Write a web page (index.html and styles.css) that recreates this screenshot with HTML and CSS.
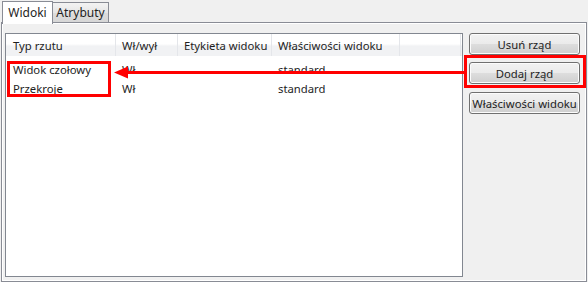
FILE: index.html
```html
<!DOCTYPE html>
<html lang="pl">
<head>
<meta charset="utf-8">
<link rel="stylesheet" href="styles.css">
</head>
<body>
<div class="window">
  <div class="tabs">
    <div class="tab active">Widoki</div>
    <div class="tab">Atrybuty</div>
  </div>
  <div class="panel">
    <div class="list">
      <div class="row header">
        <div class="cell c1">Typ rzutu</div>
        <div class="cell c2">Wł/wył</div>
        <div class="cell c3">Etykieta widoku</div>
        <div class="cell c4">Właściwości widoku</div>
        <div class="cell c5"></div>
      </div>
      <div class="row item">
        <div class="cell c1">Widok czołowy</div>
        <div class="cell c2">Wł</div>
        <div class="cell c3"></div>
        <div class="cell c4">standard</div>
      </div>
      <div class="row item">
        <div class="cell c1">Przekroje</div>
        <div class="cell c2">Wł</div>
        <div class="cell c3"></div>
        <div class="cell c4">standard</div>
      </div>
    </div>
    <div class="buttons">
      <button class="btn">Usuń rząd</button>
      <button class="btn second">Dodaj rząd</button>
      <button class="btn third">Właściwości widoku</button>
    </div>
  </div>
  <svg class="annot" width="588" height="282" viewBox="0 0 588 282">
    <rect x="8.5" y="62.5" width="101" height="33" fill="none" stroke="#ff0000" stroke-width="3"/>
    <rect x="465.5" y="56.5" width="119" height="30" fill="none" stroke="#ff0000" stroke-width="3"/>
    <rect x="125" y="71" width="340" height="3" fill="#ff0000"/>
    <polygon points="114,72.5 128,66.5 128,78.5" fill="#ff0000"/>
  </svg>
</div>
</body>
</html>
```
FILE: styles.css
```css
* { box-sizing: border-box; }
html, body {
  margin: 0;
  padding: 0;
  background: #f0f0f0;
  font-family: "Noto Sans", "Open Sans", sans-serif;
  font-size: 11.3px;
  color: #1e1e1e;
}
.window {
  position: relative;
  width: 588px;
  height: 282px;
}
.tabs {
  display: flex;
  align-items: flex-end;
  height: 23px;
  padding-left: 2px;
}
.tab {
  height: 20px;
  width: 57px;
  border: 1px solid #898c95;
  border-bottom: none;
  background: linear-gradient(#f3f3f3, #e6e6e6 50%, #dcdcdc 51%, #d7d7d7);
  display: flex;
  align-items: center;
  justify-content: center;
  margin-left: -1px;
  margin-bottom: 1px;
  font-size: 12px;
}
.tab.active {
  width: 51px;
  height: 23px;
  background: #ffffff;
  margin-left: 0;
  margin-bottom: -1px;
  position: relative;
  z-index: 1;
  padding-bottom: 2px;
}
.panel {
  display: flex;
  gap: 6px;
  margin: -1px 1px 1px 1px;
  height: 260px;
  border: 1px solid #898c95;
  box-shadow: inset 1px 1px 0 #ffffff, inset -1px -1px 0 #ffffff;
  padding: 10px 5px 4px 3px;
}
.list {
  width: 458px;
  height: 244px;
  background: #ffffff;
  border: 1px solid #828790;
}
.row {
  display: flex;
}
.header {
  height: 22px;
  background: linear-gradient(#ffffff, #ffffff 45%, #f1f2f4 55%, #f1f2f4);
  margin-bottom: 4px;
}
.cell {
  padding-left: 6px;
  white-space: nowrap;
  display: flex;
  align-items: center;
}
.header .cell {
  border-right: 1px solid #e4e6ea;
}
.c1 { width: 110px; padding-left: 7px; }
.c2 { width: 62px; }
.c3 { width: 94px; }
.c4 { width: 128px; }
.c5 { width: 61px; }
.item {
  height: 19px;
}
.buttons {
  display: flex;
  flex-direction: column;
  width: 112px;
}
.btn {
  font: inherit;
  color: #1e1e1e;
  height: 22px;
  width: 111px;
  border: 1px solid #707070;
  border-radius: 3px;
  background: linear-gradient(#f2f2f2, #ebebeb 48%, #dddddd 52%, #cfcfcf);
  box-shadow: inset 0 0 0 1px #fcfcfc;
  padding: 0;
  white-space: nowrap;
}
.second { margin-top: 7px; }
.third { margin-top: 8px; }
.annot {
  position: absolute;
  left: 0;
  top: 0;
  pointer-events: none;
}
```
